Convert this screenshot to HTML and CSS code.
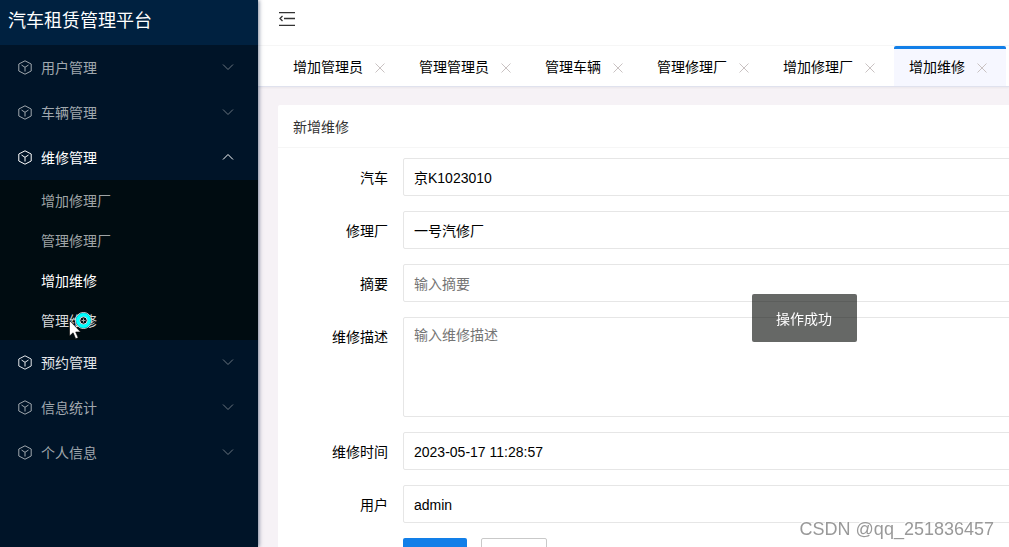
FILE: index.html
```html
<!DOCTYPE html>
<html lang="zh-CN">
<head>
<meta charset="utf-8">
<title>汽车租赁管理平台</title>
<link rel="stylesheet" href="styles.css">
</head>
<body>
<svg class="symbols" aria-hidden="true">
  <symbol id="cube" viewBox="0 0 14 15"><path d="M7 .8 13.200 4v7L7 14.200.8 11V4ZM3.500 5 7 7.300 10.500 5M7 7.300V11.500"/></symbol>
  <symbol id="down" viewBox="0 0 12 8"><path d="m1 1.500 5 5 5-5"/></symbol>
  <symbol id="up" viewBox="0 0 12 8"><path d="m1 6.500 5-5 5 5"/></symbol>
  <symbol id="close" viewBox="0 0 10 10"><path d="m.5.5 9 9m0-9-9 9"/></symbol>
</svg>
<div class="app">
  <aside class="sidebar">
    <h1 class="brand">汽车租赁管理平台</h1>
    <nav class="menu">
      <a class="item" href="#"><svg class="cube"><use href="#cube"/></svg><span>用户管理</span><svg class="arrow"><use href="#down"/></svg></a>
      <a class="item" href="#"><svg class="cube"><use href="#cube"/></svg><span>车辆管理</span><svg class="arrow"><use href="#down"/></svg></a>
      <a class="item open" href="#"><svg class="cube"><use href="#cube"/></svg><span>维修管理</span><svg class="arrow"><use href="#up"/></svg></a>
      <div class="submenu">
        <a class="subitem" href="#">增加修理厂</a>
        <a class="subitem" href="#">管理修理厂</a>
        <a class="subitem current" href="#">增加维修</a>
        <a class="subitem hover" href="#">管理维修<svg class="cursor" viewBox="0 0 26 30"><circle cx="15.500" cy="8.500" r="8" fill="#033"/><circle cx="15.500" cy="8.500" r="5.500" fill="none" stroke="#0ff" stroke-width="4"/><circle cx="15.500" cy="8.500" r="3.700" fill="#021018"/><path d="M13.500 8.500h4M15.500 6.500v4" stroke="#aaa"/><path d="M1.500 8.500v15.500l3.600-3.200 2.600 6 2.500-1.100-2.500-5.700h5Z" fill="#fff" stroke="#000" stroke-width=".6"/></svg></a>
      </div>
      <a class="item bright" href="#"><svg class="cube"><use href="#cube"/></svg><span>预约管理</span><svg class="arrow"><use href="#down"/></svg></a>
      <a class="item" href="#"><svg class="cube"><use href="#cube"/></svg><span>信息统计</span><svg class="arrow"><use href="#down"/></svg></a>
      <a class="item" href="#"><svg class="cube"><use href="#cube"/></svg><span>个人信息</span><svg class="arrow"><use href="#down"/></svg></a>
    </nav>
  </aside>
  <main class="main">
    <header class="topbar">
      <button class="fold" type="button" aria-label="收起菜单"><svg viewBox="0 0 16 14"><path d="M0 .5h16M5 6.500h11M0 13.500h16M3.500 4 1 6.500 3.500 9"/></svg></button>
    </header>
    <div class="tabs">
      <div class="tab"><a href="#">增加管理员</a><button type="button" aria-label="关闭"><svg><use href="#close"/></svg></button></div>
      <div class="tab"><a href="#">管理管理员</a><button type="button" aria-label="关闭"><svg><use href="#close"/></svg></button></div>
      <div class="tab"><a href="#">管理车辆</a><button type="button" aria-label="关闭"><svg><use href="#close"/></svg></button></div>
      <div class="tab"><a href="#">管理修理厂</a><button type="button" aria-label="关闭"><svg><use href="#close"/></svg></button></div>
      <div class="tab"><a href="#">增加修理厂</a><button type="button" aria-label="关闭"><svg><use href="#close"/></svg></button></div>
      <div class="tab active"><a href="#">增加维修</a><button type="button" aria-label="关闭"><svg><use href="#close"/></svg></button></div>
    </div>
    <section class="card">
      <h2 class="card-title">新增维修</h2>
      <form class="form">
        <div class="row"><label for="car">汽车</label><select class="field" id="car"><option>京K1023010</option></select></div>
        <div class="row"><label for="shop">修理厂</label><select class="field" id="shop"><option>一号汽修厂</option></select></div>
        <div class="row"><label for="summary">摘要</label><input class="field" id="summary" type="text" placeholder="输入摘要"></div>
        <div class="row"><label for="detail">维修描述</label><textarea class="field area" id="detail" placeholder="输入维修描述"></textarea></div>
        <div class="row"><label for="time">维修时间</label><input class="field" id="time" type="text" value="2023-05-17 11:28:57"></div>
        <div class="row"><label for="user">用户</label><input class="field" id="user" type="text" value="admin"></div>
        <div class="actions"><button class="btn primary" type="submit" aria-label="提交"></button><button class="btn" type="reset" aria-label="重置"></button></div>
      </form>
    </section>
  </main>
</div>
<div class="toast" role="status">操作成功</div>
<div class="watermark">CSDN @qq_251836457</div>
</body>
</html>
```
FILE: styles.css
```css
* { box-sizing: border-box; }
body {
  margin: 0;
  overflow: hidden;
  font: 14px/20px "Liberation Sans", "Noto Sans CJK SC", sans-serif;
  color: #000;
}
a { color: inherit; text-decoration: none; }
h1, h2 { margin: 0; font-weight: 400; }
button { padding: 0; border: 0; background: none; font: inherit; }
svg { fill: none; stroke: currentColor; flex: none; }
.symbols { position: absolute; width: 0; height: 0; }

.app { display: flex; height: 100vh; }
.sidebar {
  flex: none;
  width: 258px;
  background: #001428;
  box-shadow: 1px 0 4px rgba(0, 20, 60, .5);
  z-index: 1;
}
.brand {
  height: 45px;
  padding-left: 8px;
  background: #002140;
  color: #fff;
  font-size: 18px;
  line-height: 42px;
}
.item {
  display: flex;
  align-items: center;
  height: 45px;
  padding: 0 24px 0 18px;
  color: #a0a8ae;
}
.item span { flex: 1; margin-left: 9px; }
.cube { width: 14px; height: 15px; }
.arrow { width: 12px; height: 8px; margin-bottom: 2px; color: #6b757f; }
.open, .open .arrow { color: #fff; }
.bright { color: #e4e7ea; }
.submenu { background: #000c11; }
.subitem {
  display: block;
  position: relative;
  height: 40px;
  padding-left: 41px;
  line-height: 42px;
  color: #9fa4a6;
}
.current { color: #fff; }
.hover { color: #d9dbdc; }
.cursor { position: absolute; left: 68px; top: 12px; width: 26px; height: 30px; }

.main { flex: 1; min-width: 0; overflow: hidden; background: #f6f2f6; }
.topbar {
  height: 46px;
  padding: 12px 21px;
  background: #fff;
  border-bottom: 1px solid #f6f6f6;
}
.fold { display: block; color: #333; }
.fold svg { display: block; width: 16px; height: 14px; stroke-width: 1.3; }
.tabs {
  display: flex;
  height: 41px;
  padding-left: 20px;
  background: #fff;
  border-bottom: 1px solid #e0e2ee;
  box-shadow: 0 1px 2px rgba(0, 0, 0, .05);
}
.tab {
  display: flex;
  flex: none;
  align-items: center;
  gap: 12px;
  padding: 3px 19px 0 15px;
  border-radius: 2px 2px 0 0;
}
.tab a { padding-bottom: 2px; }
.tab button, .tab svg { display: block; width: 10px; height: 10px; color: #c9c2c2; }
.active { padding-top: 0; background: #f6f7ff; border-top: 3px solid #127fe8; }

.card { margin: 18px -20px 0 20px; background: #fff; border-radius: 2px; }
.card-title {
  height: 43px;
  padding: 0 15px;
  border-bottom: 1px solid #f6f6f6;
  color: #333;
  font-size: 14px;
  line-height: 44px;
}
.form { padding: 10px 0 15px; }
.row { display: flex; margin-bottom: 15px; }
.row label { flex: none; width: 125px; padding: 10px 15px 0 0; text-align: right; }
.field {
  flex: 1;
  min-width: 0;
  height: 38px;
  margin: 0;
  padding: 1px 10px 0;
  border: 1px solid #e6e6e6;
  border-radius: 2px;
  background: #fff;
  color: #000;
  font: inherit;
  appearance: none;
  outline: 0;
}
.field::placeholder { color: #757575; }
.area { height: 100px; padding: 7px 10px; resize: none; }
.actions { display: flex; gap: 14px; padding-left: 125px; }
.btn { width: 66px; height: 38px; border: 1px solid #c9c9c9; border-radius: 2px; }
.primary { width: 64px; border: 0; background: #127fe8; }

.toast {
  position: fixed;
  left: 752px;
  top: 294px;
  z-index: 2;
  padding: 15px 25px 13px 24px;
  border-radius: 2px;
  background: rgba(0, 3, 0, .6);
  color: #fff;
}
.watermark {
  position: fixed;
  right: 15px;
  bottom: 7px;
  z-index: 2;
  color: #999;
  font-size: 18px;
  line-height: 22px;
  text-shadow: -1px -1px 0 #fff;
}
```
